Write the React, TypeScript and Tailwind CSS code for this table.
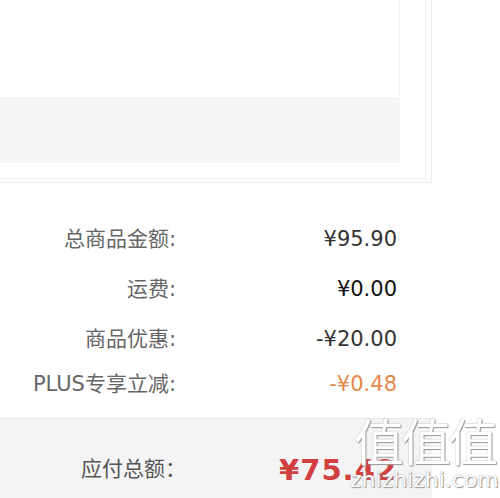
import React from "react";

const font = { fontFamily: '"DejaVu Sans", "Noto Sans CJK SC", sans-serif' };

const rows = [
  { label: "总商品金额:", value: "¥95.90", color: "text-[#333333]" },
  { label: "运费:", value: "¥0.00", color: "text-[#111111]" },
  { label: "商品优惠:", value: "-¥20.00", color: "text-[#333333]" },
  { label: "PLUS专享立减:", value: "-¥0.48", color: "text-[#e6874a]" },
];

export default function App() {
  return (
    <div className="relative w-[500px] h-[498px] overflow-hidden bg-white" style={font}>
      {/* product card (cut off at the top) */}
      <div className="w-[432px] h-[183px] border-r border-b border-[#ededed]">
        <div className="w-[426px] h-[179px] border-r border-b border-[#f3f3f3]">
          <div className="w-[400px] h-[97px] border-r border-[#f2f2f2]" />
          <div className="w-[400px] h-[66px] bg-[#f5f5f5]" />
        </div>
      </div>

      {/* price breakdown */}
      <div className="mt-[31px] flex flex-col">
        {rows.map((r, i) => (
          <div
            key={r.label}
            className={`flex items-center text-[21px] leading-[26px] ${i === 3 ? "h-[40px]" : "h-[50px]"}`}
          >
            <div className="w-[176px] text-right text-[#666666]">{r.label}</div>
            <div className={`w-[221px] text-right ${r.color}`}>{r.value}</div>
          </div>
        ))}
      </div>

      {/* total */}
      <div className="mt-[14px] w-[432px] h-[80px] bg-[#f4f4f4] border-t border-[#e8e8e8] pt-[33px]">
        <div className="flex items-center h-[36px]">
          <div className="w-[186px] text-right text-[21px] text-[#555555]">应付总额：</div>
          <div className="w-[211px] text-right text-[29px] leading-[36px] font-bold tracking-[1px] text-[#d23f3f]">
            ¥75.42
          </div>
        </div>
      </div>

      {/* watermark */}
      <div className="absolute left-[350px] top-[408px] flex flex-col items-center pointer-events-none">
        <div
          className="text-[50px] leading-[62px] text-white tracking-[-3px]"
          style={{ fontFamily: '"Noto Sans CJK SC", sans-serif', textShadow: "0 0 1px #888, 1px 1px 1px #999" }}
        >
          值值值
        </div>
        <div
          className="text-[22px] leading-[26px] text-white -mt-[3px]"
          style={{ fontFamily: '"DejaVu Sans", sans-serif', textShadow: "0 0 1px #888, 1px 1px 1px #999" }}
        >
          zhizhizhi.com
        </div>
      </div>
    </div>
  );
}
